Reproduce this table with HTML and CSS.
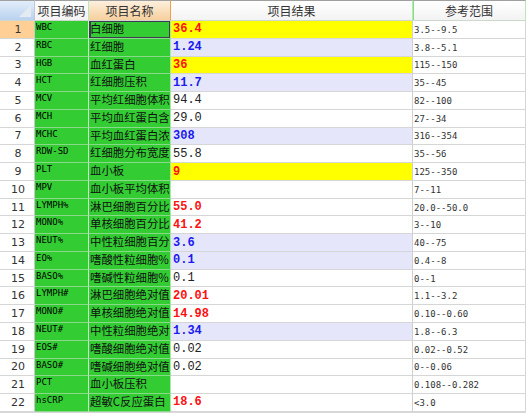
FILE: index.html
```html
<!DOCTYPE html>
<html>
<head>
<meta charset="utf-8">
<link rel="stylesheet" href="styles.css">
</head>
<body>
<div class="grid">
  <div class="hd corner"><span class="tri"></span></div>
  <div class="hd">项目编码</div>
  <div class="hd sel">项目名称</div>
  <div class="hd">项目结果</div>
  <div class="hd rhd">参考范围</div>

  <div class="num cur">1</div><div class="code">WBC</div><div class="name focus">白细胞</div><div class="res y red">36.4</div><div class="rng">3.5--9.5</div>
  <div class="num">2</div><div class="code">RBC</div><div class="name">红细胞</div><div class="res l blue">1.24</div><div class="rng">3.8--5.1</div>
  <div class="num">3</div><div class="code">HGB</div><div class="name">血红蛋白</div><div class="res y red">36</div><div class="rng">115--150</div>
  <div class="num">4</div><div class="code">HCT</div><div class="name">红细胞压积</div><div class="res l blue">11.7</div><div class="rng">35--45</div>
  <div class="num">5</div><div class="code">MCV</div><div class="name">平均红细胞体积</div><div class="res">94.4</div><div class="rng">82--100</div>
  <div class="num">6</div><div class="code">MCH</div><div class="name">平均血红蛋白含量</div><div class="res">29.0</div><div class="rng">27--34</div>
  <div class="num">7</div><div class="code">MCHC</div><div class="name">平均血红蛋白浓度</div><div class="res l blue">308</div><div class="rng">316--354</div>
  <div class="num">8</div><div class="code">RDW-SD</div><div class="name">红细胞分布宽度</div><div class="res">55.8</div><div class="rng">35--56</div>
  <div class="num">9</div><div class="code">PLT</div><div class="name">血小板</div><div class="res y red">9</div><div class="rng">125--350</div>
  <div class="num">10</div><div class="code">MPV</div><div class="name">血小板平均体积</div><div class="res"></div><div class="rng">7--11</div>
  <div class="num">11</div><div class="code">LYMPH%</div><div class="name">淋巴细胞百分比</div><div class="res red">55.0</div><div class="rng">20.0--50.0</div>
  <div class="num">12</div><div class="code">MONO%</div><div class="name">单核细胞百分比</div><div class="res red">41.2</div><div class="rng">3--10</div>
  <div class="num">13</div><div class="code">NEUT%</div><div class="name">中性粒细胞百分比</div><div class="res l blue">3.6</div><div class="rng">40--75</div>
  <div class="num">14</div><div class="code">EO%</div><div class="name">嗜酸性粒细胞%</div><div class="res l blue">0.1</div><div class="rng">0.4--8</div>
  <div class="num">15</div><div class="code">BASO%</div><div class="name">嗜碱性粒细胞%</div><div class="res">0.1</div><div class="rng">0--1</div>
  <div class="num">16</div><div class="code">LYMPH#</div><div class="name">淋巴细胞绝对值</div><div class="res red">20.01</div><div class="rng">1.1--3.2</div>
  <div class="num">17</div><div class="code">MONO#</div><div class="name">单核细胞绝对值</div><div class="res red">14.98</div><div class="rng">0.10--0.60</div>
  <div class="num">18</div><div class="code">NEUT#</div><div class="name">中性粒细胞绝对值</div><div class="res l blue">1.34</div><div class="rng">1.8--6.3</div>
  <div class="num">19</div><div class="code">EOS#</div><div class="name">嗜酸细胞绝对值</div><div class="res">0.02</div><div class="rng">0.02--0.52</div>
  <div class="num">20</div><div class="code">BASO#</div><div class="name">嗜碱细胞绝对值</div><div class="res">0.02</div><div class="rng">0--0.06</div>
  <div class="num">21</div><div class="code">PCT</div><div class="name">血小板压积</div><div class="res"></div><div class="rng">0.108--0.282</div>
  <div class="num">22</div><div class="code">hsCRP</div><div class="name">超敏C反应蛋白</div><div class="res red">18.6</div><div class="rng">&lt;3.0</div>
</div>
</body>
</html>
```
FILE: styles.css
```css
html, body {
  margin: 0;
  padding: 0;
  background: #ffffff;
  overflow: hidden;
}

.grid {
  display: grid;
  grid-template-columns: 35px 54px 82px 242px 113px;
  grid-template-rows: 21px repeat(22, 17.77px);
  border-bottom: 1px solid #d8d8d8;
  width: 526px;
  box-shadow: inset 1px 0 0 #a8a8a8;
}

.grid > div {
  box-sizing: border-box;
  border-right: 1px solid #d6d6d6;
  border-bottom: 1px solid #d6d6d6;
  overflow: hidden;
  white-space: nowrap;
}

.hd {
  display: flex;
  align-items: center;
  justify-content: center;
  font-family: "Noto Sans CJK SC", sans-serif;
  font-size: 12px;
  color: #333;
  background: linear-gradient(#ffffff, #f3f3f3);
  border-top: 1px solid #a0a0a0;
  border-bottom-color: #cfd8cf !important;
  border-right-color: #b8e8b8 !important;
}

.hd.sel {
  background: linear-gradient(#fdf0de, #f6cf9c);
  border-right-color: #f2a048 !important;
}

.hd.rhd {
  box-shadow: inset 1px 0 0 #80e080;
}

.corner {
  position: relative;
  background: linear-gradient(#e3eefb, #b9d1ef);
  border-right-color: #c0c8d8 !important;
}

.tri {
  position: absolute;
  right: 3px;
  bottom: 3px;
  width: 0;
  height: 0;
  border-left: 12px solid transparent;
  border-bottom: 12px solid #e4eaf2;
}

.num {
  display: flex;
  align-items: center;
  justify-content: center;
  font-family: "DejaVu Sans", sans-serif;
  font-size: 11px;
  color: #333;
  background: #ffffff;
  padding-left: 2px;
  border-right-color: #c8c8c8 !important;
}

.num.cur {
  background: #ffcf96;
}

.code {
  background: #33cc33;
  font-family: "DejaVu Sans Mono", monospace;
  font-size: 9px;
  line-height: 10px;
  color: #000;
  padding: 1px 0 0 1px;
  border-right-color: #c8f0c8 !important;
  border-bottom-color: #8ad88a !important;
}

.name {
  background: #33cc33;
  font-family: "Noto Sans CJK SC", sans-serif;
  font-size: 11.4px;
  line-height: 15px;
  color: #111;
  padding: 0 0 0 1px;
  border-right-color: #a8e8a8 !important;
  border-bottom-color: #8ad88a !important;
}

.name.focus {
  box-shadow: inset 0 0 0 1px #403a55, inset 1px 0 0 1px #403a55;
}

.res {
  display: flex;
  align-items: center;
  padding-left: 2px;
  font-family: "Liberation Mono", monospace;
  font-size: 12px;
  color: #222;
  background: #ffffff;
  border-right-color: #d0d0d0 !important;
}

.res.y { background: #ffff00; }
.res.l { background: #e6e6fa; }
.res.red { color: #ff1010; font-weight: bold; }
.res.blue { color: #1a1af0; font-weight: bold; }

.rng {
  display: flex;
  align-items: center;
  padding: 1px 0 0 1px;
  font-family: "DejaVu Sans Mono", monospace;
  font-size: 9px;
  color: #333;
  background: #ffffff;
}
```
